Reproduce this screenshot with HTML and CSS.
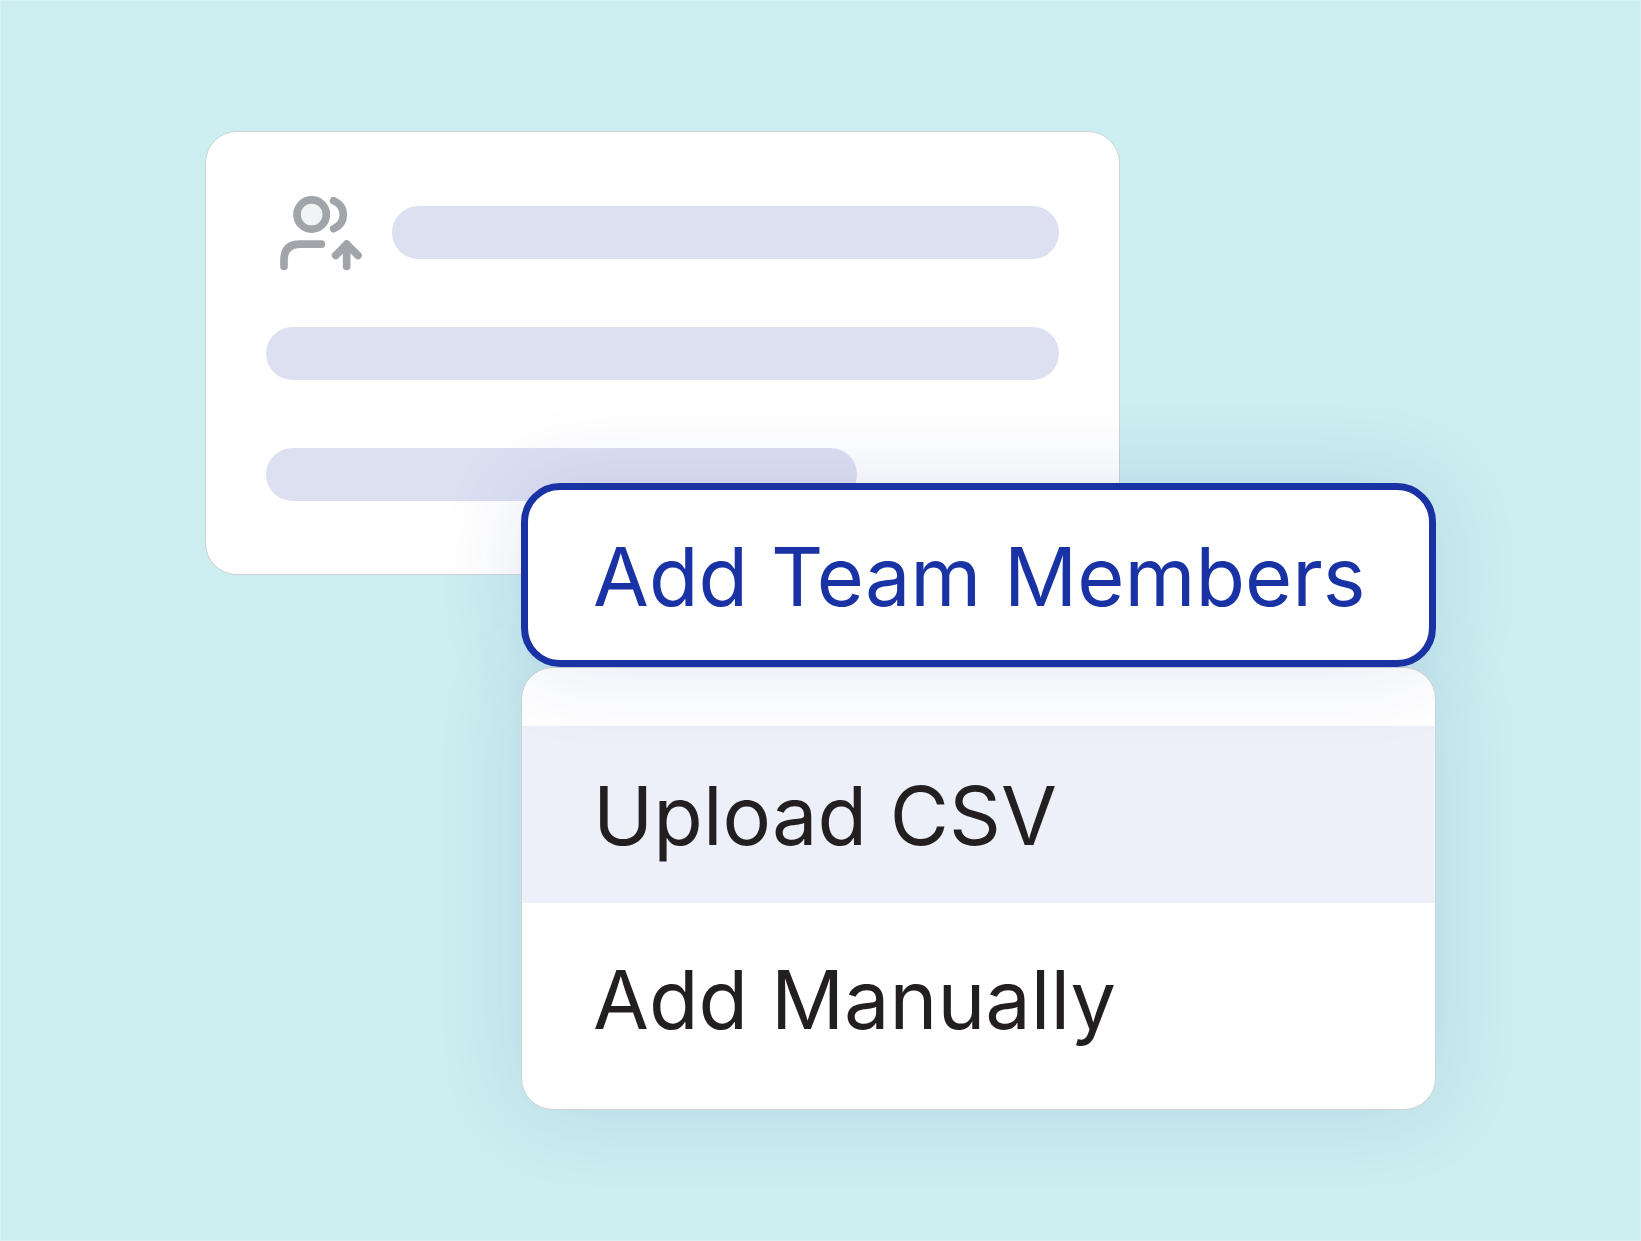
FILE: index.html
```html
<!DOCTYPE html>
<html lang="en-US">
<head>
<meta charset="utf-8">
<title>Add Team Members</title>
<link rel="stylesheet" href="styles.css">
</head>
<body>
<main class="stage">
	<section class="card">
		<div class="row">
			<svg class="team-icon" viewBox="58 46 246 224" aria-hidden="true">
				<circle cx="153" cy="104" r="44" fill="#f1f4f4"/>
				<path d="M219 63C238 71 248 86 248 105S238 139 219 147"/>
				<path d="M70 260V241C70 209 86 193 118 193H182"/>
				<path d="M258 260V193M225 227L258 193L292 227"/>
			</svg>
			<div class="bar"></div>
		</div>
		<div class="row"><div class="bar"></div></div>
		<div class="row"><div class="bar bar-short"></div></div>
	</section>
	<div class="dropdown">
		<button class="toggle" type="button" aria-expanded="true">Add Team Members</button>
		<ul class="menu">
			<li><button class="item active" type="button">Upload CSV</button></li>
			<li><button class="item" type="button">Add Manually</button></li>
		</ul>
	</div>
</main>
</body>
</html>
```
FILE: styles.css
```css
* {
	box-sizing: border-box;
}
body {
	margin: 0;
	background-color: #cceef0;
	font-family: Inter, "Liberation Sans", sans-serif;
}
.stage {
	display: grid;
	grid-template-columns: 316fr 599fr 316fr;
	grid-template-rows: 352px 92px auto;
	align-items: start;
	min-height: 100vh;
	padding: 131px 12.5%;
	box-shadow: inset 0 0 0 1px #d6f2f4;
}

/* card with placeholder lines */
.card {
	grid-column: 1 / 3;
	grid-row: 1 / 3;
	align-self: stretch;
	display: flex;
	flex-direction: column;
	gap: 68px;
	padding: 74px 60px 0;
	background-color: white;
	border: 1px solid #cfd3d6;
	border-radius: 32px;
}
.row {
	display: flex;
	align-items: center;
	gap: 30px;
	height: 53px;
}
.bar {
	flex: 1;
	height: 53px;
	border-radius: 27px;
	background-color: #dde0f1;
}
.bar-short {
	flex: 0 0 74.5%;
}
.team-icon {
	width: 82px;
	height: 75px;
	margin-left: 14px;
	overflow: visible;
	fill: none;
	stroke: #a1a5aa;
	stroke-width: 23;
	stroke-linecap: round;
	stroke-linejoin: round;
}

/* dropdown laid over the card */
.dropdown {
	grid-column: 2 / 4;
	grid-row: 2 / 4;
}
.toggle, .item {
	display: block;
	width: 100%;
	font-family: inherit;
	font-size: 81px;
	line-height: 100px;
	text-align: left;
	white-space: nowrap;
	cursor: pointer;
}
.toggle {
	position: relative;
	padding: 37px 65px 33px;
	color: #1a33a4;
	background-color: white;
	border: 7px solid #1a33a4;
	border-radius: 39px;
	box-shadow: 0 0 88px rgba(27, 50, 160, 0.12);
}
.menu {
	display: flex;
	flex-direction: column;
	gap: 7px;
	margin: 0;
	padding: 58px 0 22px;
	list-style: none;
	background-color: white;
	border: 1px solid #cfd3d6;
	border-radius: 32px;
	box-shadow: 0 0 88px rgba(27, 50, 160, 0.12);
}
.item {
	padding: 40px 71px 37px;
	color: #231f20;
	background: none;
	border: 0;
}
.active {
	background-color: #edf0f8;
}
```
